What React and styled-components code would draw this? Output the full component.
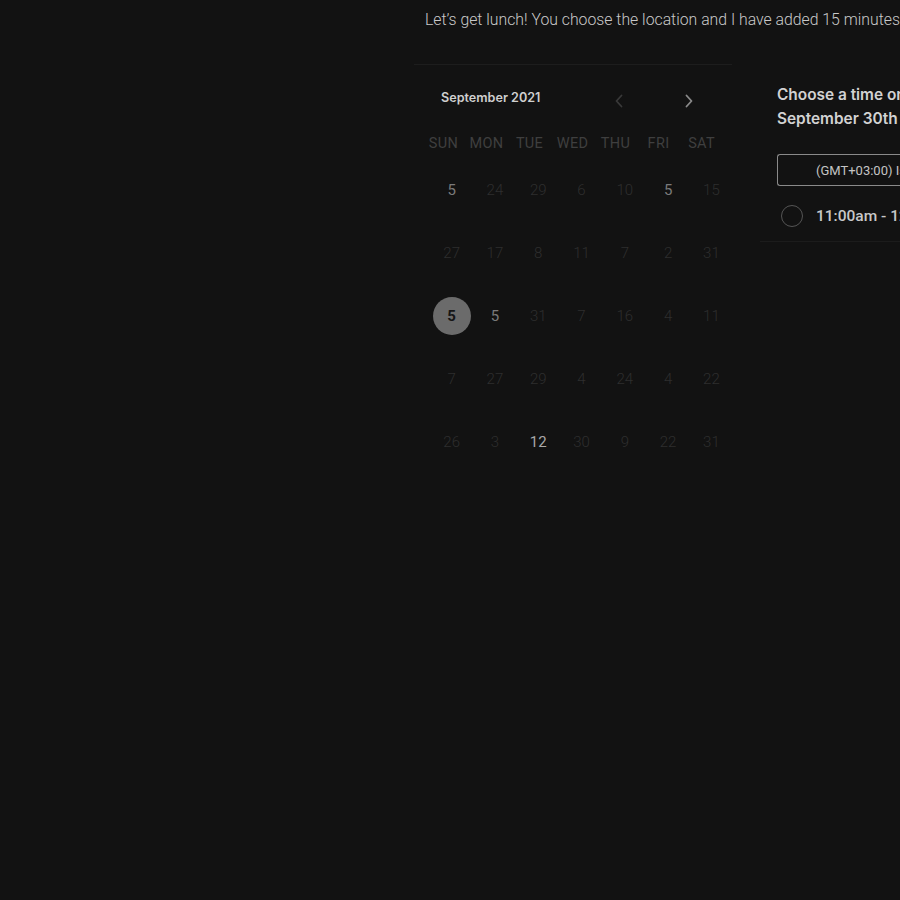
import React from "react";
import styled, { createGlobalStyle, css } from "styled-components";

const GlobalStyle = createGlobalStyle`
    html, body {
        margin: 0;
        padding: 0;
        background-color: #121212;
        overflow: hidden;
    }
    body {
        width: 900px;
        height: 900px;
        font-family: Roboto, "Liberation Sans", sans-serif;
    }
`;

const Page = styled.div`
    padding: 11px 0 0 414px;
    white-space: nowrap;
    overflow: hidden;
`;
const Intro = styled.p`
    margin: 0 0 0 11px;
    font-weight: 300;
    font-size: 15.8px;
    line-height: 18px;
    color: #c9c9c9;
`;
const Columns = styled.div`
    display: flex;
    margin-top: 35px;
`;
const CalendarCard = styled.section`
    width: 318px;
    flex-shrink: 0;
    border-top: 1px solid #1d1d1d;
`;
const CalendarHead = styled.div`
    display: flex;
    align-items: center;
    padding: 20px 0 0 27px;
    height: 24px;
`;
const MonthTitle = styled.h3`
    margin: 0;
    width: 170px;
    font-family: Inter, "Liberation Sans", sans-serif;
    font-weight: 600;
    font-size: 12.6px;
    color: #cfcfcf;
`;
const ArrowButton = styled.button`
    background: transparent;
    border: 0;
    padding: 0;
    width: 16px;
    height: 16px;
    margin-top: 7px;
    margin-left: ${p => p.$gap || 0}px;
    color: ${p => p.$dim ? "#393939" : "#8a8a8a"};
    display: flex;
    align-items: center;
    justify-content: center;
`;
const WeekRow = styled.div`
    display: grid;
    grid-template-columns: repeat(7, 43px);
    margin: 26px 0 0 8px;
`;
const WeekDay = styled.span`
    text-align: center;
    font-size: 14.5px;
    line-height: 18px;
    color: #3f3f3f;
    letter-spacing: 0.3px;
`;
const DayGrid = styled.div`
    display: grid;
    grid-template-columns: repeat(7, 43.3px);
    grid-auto-rows: 62.8px;
    margin: 6px 0 0 16px;
`;
const DayCell = styled.div`
    display: flex;
    align-items: center;
    justify-content: center;
`;
const Day = styled.span`
    width: 38px;
    height: 38px;
    border-radius: 50%;
    display: flex;
    align-items: center;
    justify-content: center;
    font-size: 15px;
    font-weight: 300;
    color: #2e2e2e;

    ${p => p.$state === "on" && css`
        color: #7a7a7a;
        font-weight: 400;
    `}
    ${p => p.$state === "bright" && css`
        color: #a8a8a8;
        font-weight: 400;
    `}
    ${p => p.$state === "sel" && css`
        background-color: #6b6b6b;
        color: #151515;
        font-weight: 700;
    `}
`;
const TimePanel = styled.section`
    margin-left: 28px;
    padding: 19px 0 0 17px;
    height: 158px;
    border-bottom: 1px solid #1c1c1c;
    flex: 1;
    overflow: hidden;
`;
const TimeTitle = styled.h3`
    margin: 0;
    font-family: Inter, "Liberation Sans", sans-serif;
    font-weight: 600;
    font-size: 15.4px;
    line-height: 24px;
    color: #d2d2d2;
`;
const ZoneSelect = styled.div`
    margin-top: 23px;
    height: 30px;
    border: 1px solid #8a8a8a;
    border-right: 0;
    border-radius: 3px 0 0 3px;
    display: flex;
    align-items: center;
    padding-left: 38px;
    font-size: 13px;
    color: #c4c4c4;
`;
const Slot = styled.label`
    display: flex;
    align-items: center;
    gap: 13px;
    margin-top: 19px;
    padding-left: 4px;
    font-size: 15.5px;
    font-weight: 500;
    color: #c8c8c8;
`;
const Radio = styled.span`
    width: 20px;
    height: 20px;
    flex-shrink: 0;
    border-radius: 50%;
    border: 1.5px solid #555;
`;

const weekDays = ["SUN", "MON", "TUE", "WED", "THU", "FRI", "SAT"];

const weeks = [
    [[5, "on"], [24], [29], [6], [10], [5, "on"], [15]],
    [[27], [17], [8], [11], [7], [2], [31]],
    [[5, "sel"], [5, "on"], [31], [7], [16], [4], [11]],
    [[7], [27], [29], [4], [24], [4], [22]],
    [[26], [3], [12, "bright"], [30], [9], [22], [31]],
];

function Chevron({ dir }) {
    return (
        <svg width="10" height="14" viewBox="0 0 10 14" fill="none">
            <path
                d={dir === "left" ? "M7.5 1.5 L2.5 7 L7.5 12.5" : "M2.5 1.5 L7.5 7 L2.5 12.5"}
                stroke="currentColor"
                strokeWidth="1.8"
                strokeLinecap="round"
                strokeLinejoin="round"
            />
        </svg>
    );
}

export default function App() {
    return (
        <>
            <GlobalStyle />
            <Page>
                <Intro>Let’s get lunch! You choose the location and I have added 15 minutes</Intro>
                <Columns>
                    <CalendarCard>
                        <CalendarHead>
                            <MonthTitle>September 2021</MonthTitle>
                            <ArrowButton $dim><Chevron dir="left" /></ArrowButton>
                            <ArrowButton $gap={54}><Chevron dir="right" /></ArrowButton>
                        </CalendarHead>
                        <WeekRow>
                            {weekDays.map(d => <WeekDay key={d}>{d}</WeekDay>)}
                        </WeekRow>
                        <DayGrid>
                            {weeks.flat().map(([n, state], i) => (
                                <DayCell key={i}>
                                    <Day $state={state}>{n}</Day>
                                </DayCell>
                            ))}
                        </DayGrid>
                    </CalendarCard>
                    <TimePanel>
                        <TimeTitle>Choose a time on<br />September 30th</TimeTitle>
                        <ZoneSelect>(GMT+03:00) Istanbul</ZoneSelect>
                        <Slot>
                            <Radio />
                            11:00am - 12:00pm
                        </Slot>
                    </TimePanel>
                </Columns>
            </Page>
        </>
    );
}
